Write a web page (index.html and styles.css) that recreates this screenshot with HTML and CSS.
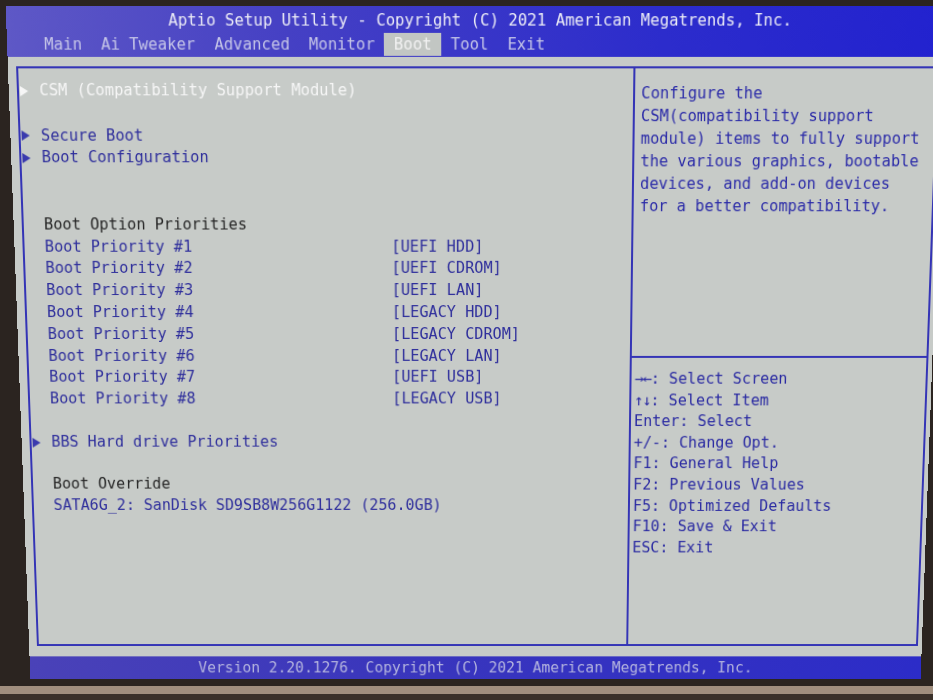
FILE: index.html
```html
<!DOCTYPE html>
<html lang="en">
<head>
    <meta charset="UTF-8">
    <title>Aptio Setup Utility - Boot</title>
    <link rel="stylesheet" href="styles.css">
</head>
<body>

<div class="screen">
    <div class="top">
        <div class="title">Aptio Setup Utility - Copyright (C) 2021 American Megatrends, Inc.</div>
        <div class="tabs">
            <span class="tab">Main</span>
            <span class="tab">Ai Tweaker</span>
            <span class="tab">Advanced</span>
            <span class="tab">Monitor</span>
            <span class="tab active">Boot</span>
            <span class="tab">Tool</span>
            <span class="tab">Exit</span>
        </div>
    </div>

    <div class="main">
        <div class="left">
            <div class="row sel"><span class="arrow"></span>CSM (Compatibility Support Module)</div>
            <div class="row"></div>
            <div class="row"><span class="arrow"></span>Secure Boot</div>
            <div class="row"><span class="arrow"></span>Boot Configuration</div>
            <div class="row"></div>
            <div class="row"></div>
            <div class="row plain">Boot Option Priorities</div>
            <div class="row"><span class="label">Boot Priority #1</span>[UEFI HDD]</div>
            <div class="row"><span class="label">Boot Priority #2</span>[UEFI CDROM]</div>
            <div class="row"><span class="label">Boot Priority #3</span>[UEFI LAN]</div>
            <div class="row"><span class="label">Boot Priority #4</span>[LEGACY HDD]</div>
            <div class="row"><span class="label">Boot Priority #5</span>[LEGACY CDROM]</div>
            <div class="row"><span class="label">Boot Priority #6</span>[LEGACY LAN]</div>
            <div class="row"><span class="label">Boot Priority #7</span>[UEFI USB]</div>
            <div class="row"><span class="label">Boot Priority #8</span>[LEGACY USB]</div>
            <div class="row"></div>
            <div class="row"><span class="arrow"></span>BBS Hard drive Priorities</div>
            <div class="row"></div>
            <div class="row plain">Boot Override</div>
            <div class="row">SATA6G_2: SanDisk SD9SB8W256G1122 (256.0GB)</div>
        </div>

        <div class="right">
            <div class="help">
                <div class="line">Configure the</div>
                <div class="line">CSM(compatibility support</div>
                <div class="line">module) items to fully support</div>
                <div class="line">the various graphics, bootable</div>
                <div class="line">devices, and add-on devices</div>
                <div class="line">for a better compatibility.</div>
            </div>
            <div class="keys">
                <div class="line"><span class="sym">→←</span>: Select Screen</div>
                <div class="line"><span class="sym">↑↓</span>: Select Item</div>
                <div class="line">Enter: Select</div>
                <div class="line">+/-: Change Opt.</div>
                <div class="line">F1: General Help</div>
                <div class="line">F2: Previous Values</div>
                <div class="line">F5: Optimized Defaults</div>
                <div class="line">F10: Save &amp; Exit</div>
                <div class="line">ESC: Exit</div>
            </div>
        </div>
    </div>

    <div class="bottom">Version 2.20.1276. Copyright (C) 2021 American Megatrends, Inc.</div>
</div>

</body>
</html>
```

FILE: styles.css
```css
html, body {
    margin: 0;
    height: 700px;
    overflow: hidden;
}
body {
    padding-top: 13px;
    box-sizing: border-box;
    font-family: "DejaVu Sans Mono", "Liberation Mono", monospace;
    font-size: 15.2px;
    background: linear-gradient(to bottom, #2b2420 0, #2b2420 686px, #a08e7e 686px, #a08e7e 694px, #3a302a 694px);
}
.screen {
    margin-left: 18px;
    width: 915px;
    background-color: #c7cbc8;
    transform-origin: 457px 329px;
    transform: perspective(1200px) rotateX(-5.5deg);
}

/* title bar + tabs */
.top {
    padding: 3px 0 1px;
    background: linear-gradient(90deg, #5e58c6 0, #4540c4 30%, #2c2ccc 70%, #2222cf 100%);
}
.title {
    height: 22px;
    line-height: 22px;
    font-size: 15.3px;
    text-align: center;
    padding-left: 9px;
    color: #ececf6;
}
.tabs {
    display: flex;
    margin-top: 1px;
    padding-left: 27px;
    height: 22px;
    line-height: 22px;
    font-size: 15.3px;
}
.tab {
    padding: 0 9.3px;
    color: #c6c6e8;
    white-space: nowrap;
}
.tab.active {
    background-color: #c2c6c3;
    color: #f2f2f2;
}

/* two panels */
.main {
    display: flex;
    height: 584px;
    margin: 9px 4px 11px 8px;
}
.left {
    width: 604px;
    height: 100%;
    box-sizing: border-box;
    border: 2px solid #3434b6;
    border-right: none;
    padding: 11px 0 0 20px;
}
.row {
    display: flex;
    height: 21.8px;
    line-height: 21.8px;
    white-space: pre;
    color: #2f2f9c;
}
.row.sel {
    color: #f6f6f6;
}
.row.plain {
    color: #262626;
}
.label {
    width: 344px;
}
.arrow {
    width: 0;
    height: 0;
    align-self: center;
    margin-left: -19px;
    margin-right: 11px;
    border-left: 8px solid #3a3aae;
    border-top: 5px solid transparent;
    border-bottom: 5px solid transparent;
}
.sel .arrow {
    border-left-color: #f6f6f6;
}

.right {
    width: 299px;
    height: 100%;
    box-sizing: border-box;
    border: 2px solid #3434b6;
    color: #2b2ba8;
}
.line {
    white-space: pre;
}
.help {
    height: 283px;
    box-sizing: border-box;
    padding: 13px 0 0 6px;
    line-height: 22px;
}
.keys {
    border-top: 2px solid #3434b6;
    padding: 11px 0 0 3px;
    line-height: 21.6px;
    color: #2a2aa2;
}
.sym {
    letter-spacing: -1px;
}

/* footer bar */
.bottom {
    height: 24px;
    line-height: 24px;
    font-size: 15px;
    text-align: center;
    color: #b4b4de;
    background: linear-gradient(90deg, #4a42b8 0, #3a36bc 40%, #2c2cc8 100%);
}
```
